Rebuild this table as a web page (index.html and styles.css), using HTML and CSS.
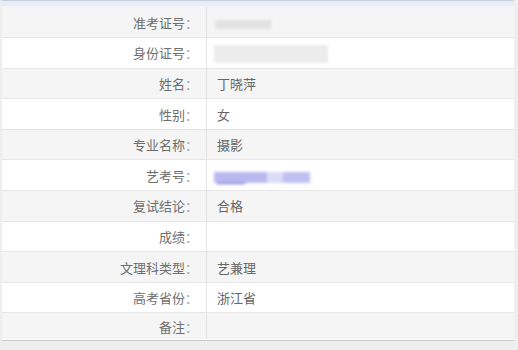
FILE: index.html
```html
<!DOCTYPE html>
<html lang="zh-CN">
<head>
<meta charset="utf-8">
<title>考生信息</title>
<link rel="stylesheet" href="styles.css">
</head>
<body>
<div class="panel">
  <div class="panel-head"></div>
  <table class="info">
    <tr class="odd"><th>准考证号<span class="colon">：</span></th><td><span class="mask mask-ticket"></span></td></tr>
    <tr><th>身份证号<span class="colon">：</span></th><td><span class="mask mask-id"></span></td></tr>
    <tr class="odd"><th>姓名<span class="colon">：</span></th><td>丁晓萍</td></tr>
    <tr><th>性别<span class="colon">：</span></th><td>女</td></tr>
    <tr class="odd"><th>专业名称<span class="colon">：</span></th><td>摄影</td></tr>
    <tr><th>艺考号<span class="colon">：</span></th><td><span class="mask mask-link"></span></td></tr>
    <tr class="odd"><th>复试结论<span class="colon">：</span></th><td>合格</td></tr>
    <tr><th>成绩<span class="colon">：</span></th><td></td></tr>
    <tr class="odd"><th>文理科类型<span class="colon">：</span></th><td>艺兼理</td></tr>
    <tr><th>高考省份<span class="colon">：</span></th><td>浙江省</td></tr>
    <tr class="odd last"><th>备注<span class="colon">：</span></th><td></td></tr>
  </table>
</div>
</body>
</html>
```
FILE: styles.css
```css
html, body {
  margin: 0;
  padding: 0;
  background: #eeeeee;
}

body {
  font-family: "Noto Sans CJK SC", "Noto Sans", sans-serif;
  font-size: 13px;
  color: #666;
}

.panel {
  margin: 0 4px 0 2px;
  height: 340px;
  background: #fff;
  border-bottom: 1px solid #c8c8c8;
}

.panel-head {
  height: 5px;
  border-top: 1px solid #c6d0dc;
  background: #e7edf5;
  border-bottom: 1px solid #f1f5fa;
}

.info {
  width: 100%;
  border-collapse: collapse;
  table-layout: fixed;
}

.info tr {
  height: 30.6px;
  background: #fff;
}

.info tr.odd {
  background: #f5f5f5;
}

.info tr + tr th,
.info tr + tr td {
  border-top: 1px solid #e6e6e6;
}

.info tr.last {
  height: 26px;
}

.info th {
  width: 196px;
  padding: 0 8px 0 0;
  text-align: right;
  font-weight: normal;
  color: #6e6e6e;
  border-right: 1px solid #e2e2e2;
  white-space: nowrap;
}

.info th .colon {
  color: #a8a8a8;
}

.info td {
  padding: 0 0 0 10px;
  color: #666;
  vertical-align: middle;
}

.mask {
  display: inline-block;
  vertical-align: middle;
  position: relative;
  filter: blur(1.5px);
}

.mask-ticket {
  width: 56px;
  height: 9px;
  margin-left: -2px;
  background: #e2e2e2;
}

.mask-id {
  width: 114px;
  height: 18px;
  margin-left: -3px;
  background: #ececec;
}

.mask-link {
  width: 96px;
  height: 11px;
  margin-left: -3px;
  background: linear-gradient(90deg, #b9b9f0 0 55%, #dcdcf7 55% 72%, #c0c0f2 72% 100%);
}

/* underline of the hidden link */
.mask-link::after {
  content: "";
  position: absolute;
  left: 3px;
  bottom: -1px;
  width: 28px;
  height: 1px;
  background: #5a5ad0;
}
```
